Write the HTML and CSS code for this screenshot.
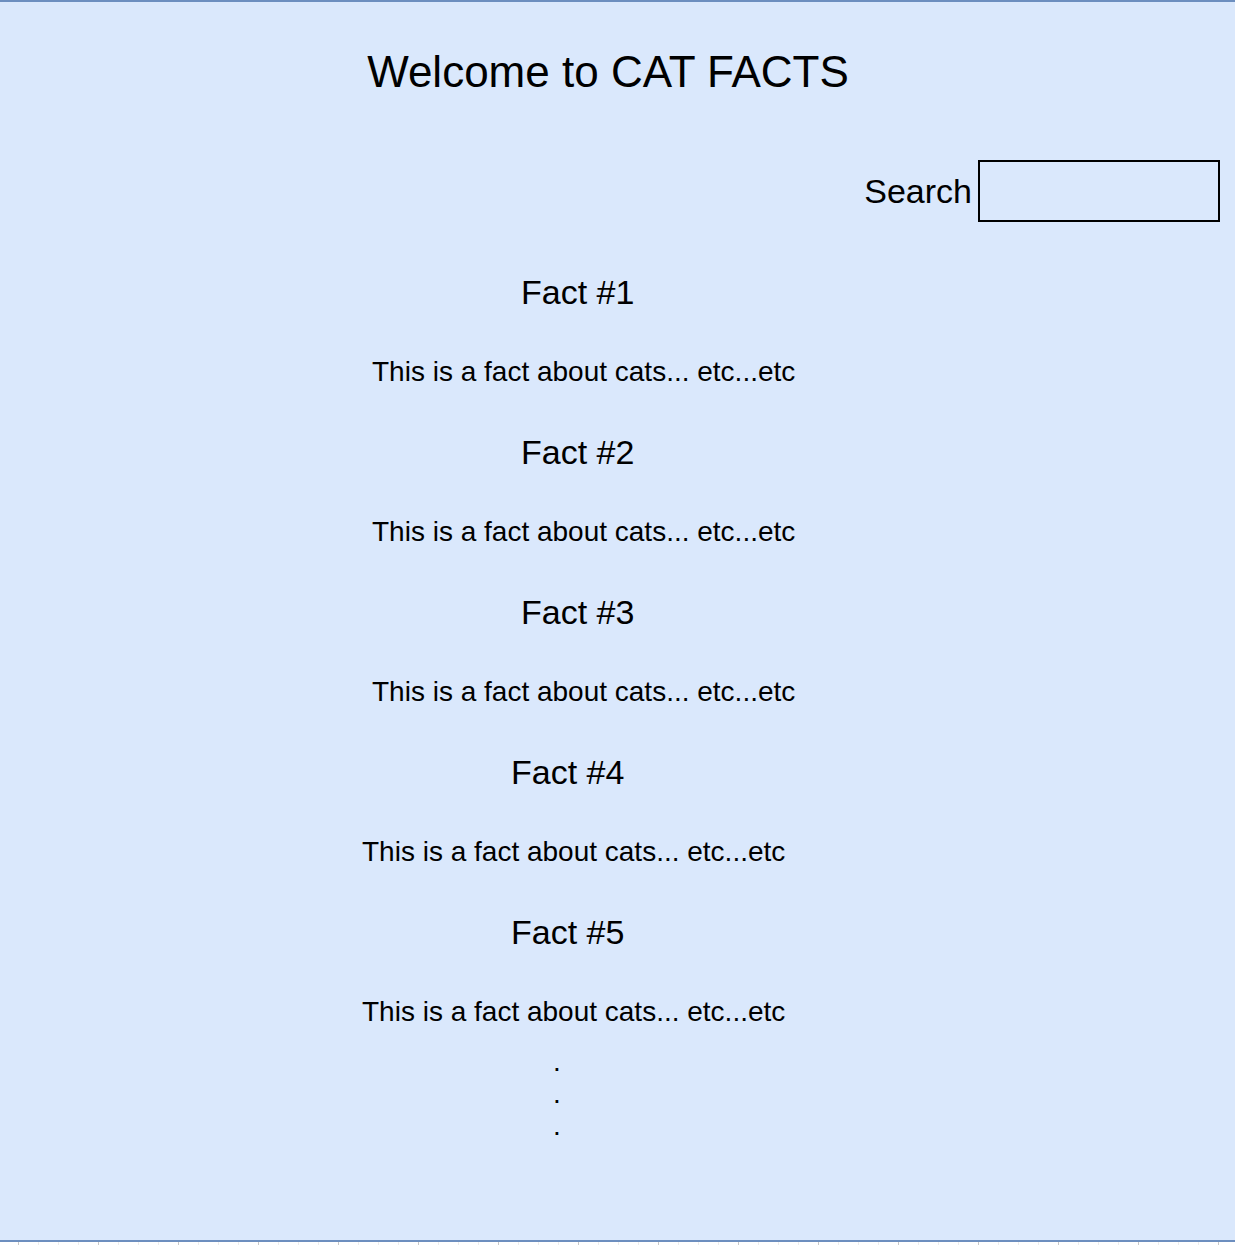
FILE: index.html
```html
<!DOCTYPE html>
<html lang="en">
<head>
<meta charset="utf-8">
<title>CAT FACTS</title>
<link rel="stylesheet" href="styles.css">
</head>
<body>
<div class="canvas">
  <h1 class="title">Welcome to CAT FACTS</h1>
  <div class="search-row">
    <label class="search-label" for="q">Search</label>
    <input class="search-box" id="q" type="text">
  </div>
  <div class="facts">
    <div class="fact">
      <div class="fact-title">Fact #1</div>
      <div class="fact-body">This is a fact about cats... etc...etc</div>
    </div>
    <div class="fact">
      <div class="fact-title">Fact #2</div>
      <div class="fact-body">This is a fact about cats... etc...etc</div>
    </div>
    <div class="fact">
      <div class="fact-title">Fact #3</div>
      <div class="fact-body">This is a fact about cats... etc...etc</div>
    </div>
    <div class="fact fact-alt">
      <div class="fact-title">Fact #4</div>
      <div class="fact-body">This is a fact about cats... etc...etc</div>
    </div>
    <div class="fact fact-alt fact-last">
      <div class="fact-title">Fact #5</div>
      <div class="fact-body">This is a fact about cats... etc...etc</div>
    </div>
    <div class="dots">
      <div class="dot">.</div>
      <div class="dot">.</div>
      <div class="dot">.</div>
    </div>
  </div>
</div>
<div class="grid-strip"></div>
</body>
</html>
```

FILE: styles.css
```css
html, body {
  margin: 0;
  padding: 0;
  background: #ffffff;
}

body {
  font-family: "Liberation Sans", Arial, Helvetica, sans-serif;
  color: #000000;
  overflow: hidden;
}

.canvas {
  box-sizing: border-box;
  height: 1242px;
  background: #dae8fc;
  border-top: 2px solid #6c8ebf;
  border-bottom: 2px solid #6c8ebf;
  padding-top: 48px;
}

.title {
  margin: 0;
  font-weight: normal;
  font-size: 44px;
  line-height: 44px;
  height: 44px;
  text-align: center;
  padding-right: 19px;
}

.search-row {
  margin-top: 66px;
  display: flex;
  justify-content: flex-end;
  align-items: center;
  gap: 6px;
  padding-right: 15px;
}

.search-label {
  font-size: 34px;
  line-height: 34px;
}

.search-box {
  box-sizing: border-box;
  width: 242px;
  height: 62px;
  margin: 0;
  border: 2px solid #000000;
  background: transparent;
  padding: 0;
  outline: none;
}

.facts {
  margin-top: 53px;
}

.fact {
  padding-left: 372px;
}

.fact-alt {
  padding-left: 362px;
}

.fact-title {
  font-size: 34px;
  line-height: 34px;
  height: 34px;
  padding-left: 149px;
  margin-bottom: 49px;
}

.fact-body {
  font-size: 28px;
  line-height: 28px;
  height: 28px;
  margin-bottom: 49px;
  white-space: nowrap;
}

.fact-last .fact-body {
  margin-bottom: 20px;
}

.dots {
  padding-left: 553px;
}

.dot {
  font-size: 28px;
  line-height: 32px;
  height: 32px;
}

.grid-strip {
  height: 3px;
  background-color: #ffffff;
  background-image:
    linear-gradient(to right, transparent 18px, #c8c8c8 18px, #c8c8c8 19px, transparent 19px),
    linear-gradient(to right, transparent 18px, #ececec 18px, #ececec 19px, transparent 19px);
  background-size: 80px 3px, 20px 3px;
  background-repeat: repeat-x;
}
```
